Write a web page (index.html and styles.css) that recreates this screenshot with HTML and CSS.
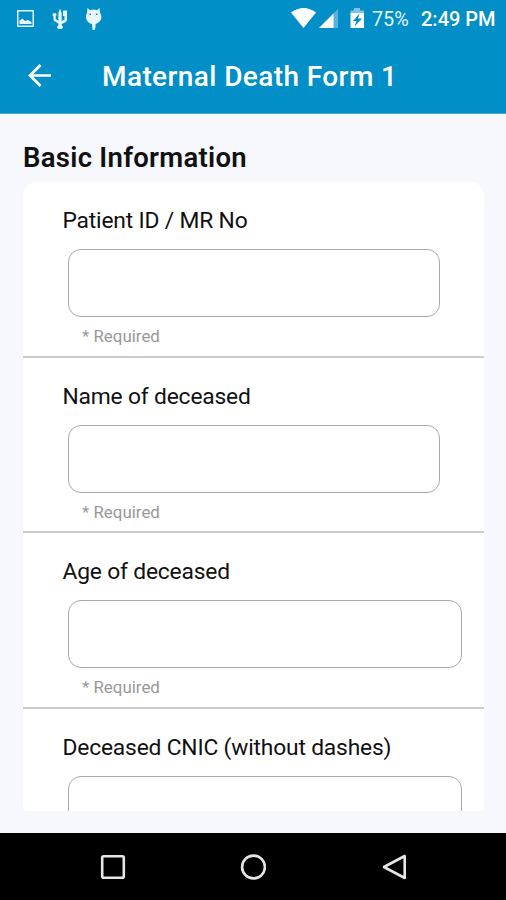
FILE: index.html
```html
<!DOCTYPE html>
<html lang="en">
<head>
<meta charset="utf-8">
<title>Maternal Death Form 1</title>
<link rel="stylesheet" href="styles.css">
</head>
<body>
<header class="top">
  <div class="status">
    <svg class="notices" width="90" height="24" viewBox="0 0 90 24" fill="#e9f6fd">
      <path fill-rule="evenodd" d="M1 0H16Q17 0 17 1V16Q17 17 16 17H1Q0 17 0 16V1Q0 0 1 0ZM1.500 1.500V15.500H15.500V1.500Z"/>
      <path d="M2.500 14V10.500L5.500 8.500L8 11L11 10L14.500 12V14Z"/>
      <path d="M41.400 3L43 -1.500L44.700 3V11L47.500 9.500V6H46V.5H50V9.500Q50 11.500 48 12.500L44.700 14V15.500Q46 16 46 17.500Q45.500 19 43 19Q40.500 19 40 17.500Q40 16 41.400 15.500V13.500L38 11.500Q36.500 11 36.500 9V6.500Q35.500 6 35.500 4.500Q35.500 3 37.500 3Q39.500 3 39.500 4.500Q39.500 6 38.700 6.500V9L41.400 10.700Z"/>
      <path fill-rule="evenodd" d="M70.500 -2L73 .2Q76.500 -1 80 .2L82.500 -2L83 2.500Q86 8 83 11Q81 13.500 78.500 14V17L77.500 20H75.500L75 14Q70 13 69 8Q68.500 5 70 3ZM72.500 3.500V5H74V3.500ZM79 3.500V5H80.500V3.500Z"/>
    </svg>
    <div class="readings">
      <svg class="signals" width="74" height="22" viewBox="0 0 74 22">
        <path fill="#fff" d="M0 4.500Q12.500 -4.500 25 4.500L12.500 20Z"/>
        <path fill="#58b4dc" d="M47 1V20H28Z"/>
        <path fill="#fff" d="M42.500 5.500V20H28Z"/>
        <path fill="#7dc4e5" d="M59.500 5V2.500H63V0H69V2.500H73V5Z"/>
        <path fill="#fff" fill-rule="evenodd" d="M59.500 5H73V20H59.500ZM68.500 5.500L62 13H65.500L63.500 18.500L71 10.500H67Z"/>
      </svg>
      <span class="charge">75%</span>
      <span class="clock">2:49 PM</span>
    </div>
  </div>
  <div class="bar">
    <svg class="back" width="24" height="24" viewBox="0 0 24 24" fill="none" stroke="#fff" stroke-width="2.700"><path d="M24 11.500H3M13.500 1L3 11.500L13.500 22"/></svg>
    <h1 class="title">Maternal Death Form 1</h1>
  </div>
</header>
<main class="content">
  <h2 class="section">Basic Information</h2>
  <form class="card">
    <div class="field"><label class="label" for="mr">Patient ID / MR No</label><input class="box" id="mr"><p class="hint">* Required</p></div>
    <div class="field"><label class="label" for="name">Name of deceased</label><input class="box" id="name"><p class="hint">* Required</p></div>
    <div class="field"><label class="label" for="age">Age of deceased</label><input class="box wide" id="age"><p class="hint">* Required</p></div>
    <div class="field last"><label class="label" for="cnic">Deceased CNIC (without dashes)</label><input class="box wide" id="cnic"></div>
  </form>
</main>
<nav class="nav">
  <svg width="26" height="26" viewBox="0 0 26 26"><rect x="2.200" y="2.200" width="21.600" height="21.600" rx="1.500"/></svg>
  <svg width="26" height="26" viewBox="0 0 26 26"><circle cx="13.500" cy="13" r="11.400"/></svg>
  <svg width="26" height="26" viewBox="0 0 26 26"><path d="M23.700 2V24L3 13Z"/></svg>
</nav>
</body>
</html>
```
FILE: styles.css
```css
* { box-sizing: border-box; }
body {
  margin: 0;
  height: 900px;
  overflow: hidden;
  display: flex;
  flex-direction: column;
  background: #f7f8fe;
  color: #111;
  font-family: Roboto, "Liberation Sans", sans-serif;
}
h1, h2, p { margin: 0; font-weight: 500; }
.top { height: 114px; background: #028fc7; color: #fff; border-bottom: 1px solid #45abd5; }
.status { height: 38px; display: flex; justify-content: space-between; padding: 0 11px 0 17px; }
.notices { margin-top: 10px; overflow: visible; }
.readings { display: flex; }
.signals { margin-top: 8px; }
.charge, .clock { font-size: 20px; line-height: 39px; white-space: nowrap; }
.charge { width: 37px; margin-left: 7px; font-size: 19.800px; color: #e4f4fc; }
.clock { width: 74px; margin-left: 12px; font-weight: 500; }
.bar { height: 75px; display: flex; align-items: center; padding-left: 27px; }
.title { margin-left: 51px; padding-top: 2px; font-size: 28px; font-weight: 550; line-height: 36px; letter-spacing: .4px; white-space: nowrap; }
.content { height: 719px; padding: 25px 22px 22px 23px; display: flex; flex-direction: column; }
.section { height: 42.500px; padding-top: 1px; line-height: 36px; font-size: 27.500px; font-weight: 600; letter-spacing: .28px; white-space: nowrap; }
.card { flex: 1; min-height: 0; overflow: hidden; background: #fff; border-radius: 14px 14px 4px 4px; }
.field { height: 175.800px; padding: 22px 22px 0 39.500px; border-bottom: 2px solid #cbcbcb; display: flex; flex-direction: column; }
.field:first-child { height: 176px; }
.last { border-bottom: 0; }
.label { height: 45.200px; line-height: 33px; font-size: 22.800px; letter-spacing: -.18px; white-space: nowrap; }
.box { flex: none; width: 372px; height: 68px; margin: 0 0 0 5px; border: 1.500px solid #a9a9a9; border-radius: 13px; background: #fff; outline: 0; }
.wide { width: 394px; }
.hint { margin-left: 19.500px; padding-top: 7px; font-size: 16.900px; line-height: 24px; font-weight: 400; color: #999; }
.nav { height: 67px; background: #000; display: flex; align-items: center; justify-content: center; gap: 114.500px; }
.nav svg { fill: none; stroke: #e6e6e6; stroke-width: 2.600; stroke-linejoin: round; }
```
